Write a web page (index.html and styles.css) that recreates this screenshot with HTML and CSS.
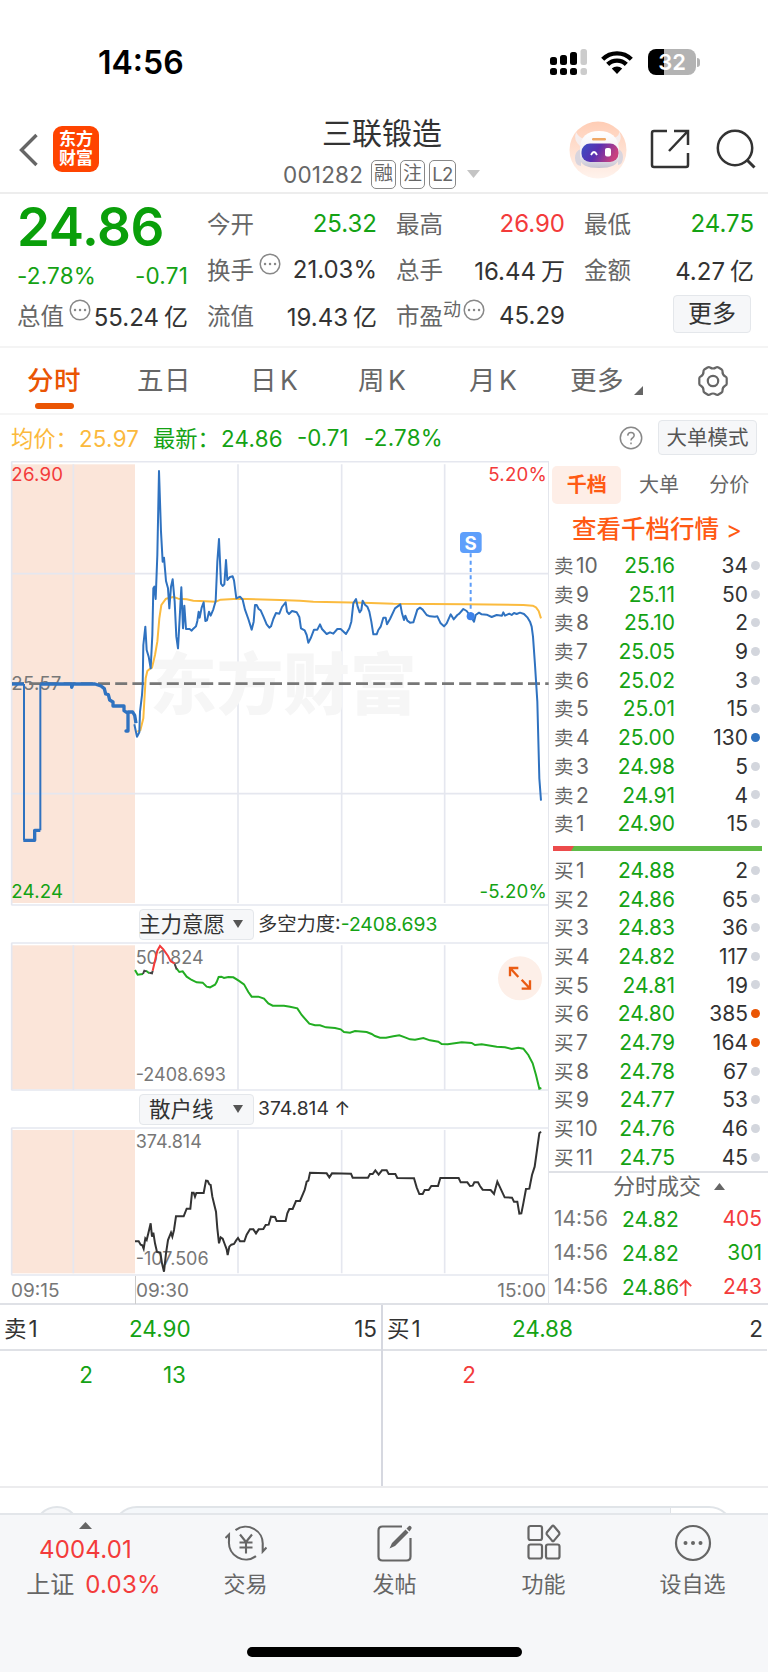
FILE: index.html
```
<!DOCTYPE html>
<html lang="zh-CN">
<head>
	<meta charset="utf-8">
	<title>三联锻造 001282</title>
	<link rel="stylesheet" href="styles.css">
</head>
<body>

<!-- Phone status bar -->
<div class="status">
	<span class="clock">14:56</span>
	<svg class="signal" width="38" height="26" viewBox="0 0 38 26">
		<g fill="#000">
			<rect x="0" y="8" width="7" height="8" rx="2.5"/><rect x="10" y="6" width="7" height="10" rx="2.5"/><rect x="20" y="3" width="7" height="13" rx="2.5"/>
			<rect x="0" y="19" width="7" height="7" rx="2.5"/><rect x="10" y="19" width="7" height="7" rx="2.5"/><rect x="20" y="19" width="7" height="7" rx="2.5"/>
		</g>
		<rect x="30.500" y="0" width="6.500" height="16" rx="2.500" fill="#ccc"/><rect x="30.500" y="19" width="6.500" height="7" rx="2.500" fill="#ccc"/>
	</svg>
	<svg class="wifi" width="32" height="24" viewBox="0 0 32 24">
		<g fill="none" stroke="#000" stroke-width="4.400">
			<path d="M1.700 9.200a20.400 20.400 0 0 1 28.600 0"/>
			<path d="M6.700 14.400a13.300 13.300 0 0 1 18.600 0"/>
		</g>
		<path d="M10.800 18.500a7.500 7.500 0 0 1 10.400 0L16 24z" fill="#000"/>
	</svg>
	<div class="battery"><span>32</span></div>
	<i class="battery-cap"></i>
</div>

<!-- Title bar -->
<div class="header">
	<svg class="back" width="20" height="34" viewBox="0 0 20 34"><path d="M17.500 2 2.500 17l15 15" fill="none" stroke="#666" stroke-width="3.400"/></svg>
	<div class="logo">东方<br>财富</div>
	<div class="title">
		<div class="name">三联锻造</div>
		<div class="code">
			<span class="num">001282</span><span class="tag">融</span><span class="tag">注</span><span class="tag l2">L2</span>
			<svg width="13" height="8" viewBox="0 0 13 8"><path d="M0 0h13L6.500 8z" fill="#c4c4c4"/></svg>
		</div>
	</div>
	<svg class="robot" width="58" height="58" viewBox="0 0 58 58">
		<defs>
			<linearGradient id="halo" x1="0" y1="0" x2="0" y2="1"><stop offset="0" stop-color="#ffcdb5"/><stop offset="1" stop-color="#fff3ed"/></linearGradient>
			<linearGradient id="visor" x1="0" y1="0" x2="1" y2=".3"><stop offset="0" stop-color="#3a4fc4"/><stop offset=".5" stop-color="#5a2fb0"/><stop offset="1" stop-color="#c8407f"/></linearGradient>
			<linearGradient id="shell" x1="0" y1="0" x2="0" y2="1"><stop offset="0" stop-color="#fff"/><stop offset=".6" stop-color="#f2eff3"/><stop offset="1" stop-color="#c6c4d2"/></linearGradient>
		</defs>
		<circle cx="29" cy="29" r="28.500" fill="url(#halo)"/>
		<path d="M7 11q3 6 9 7l-5 7q-7-6-4-14zM50 10q1 5-5 7l4 6q5-5 1-13z" fill="#f6eeee"/>
		<path d="M6 37q0-7 6-9v17q-6-1-6-8zM54 36q0-6-5-8v16q5-1 5-8z" fill="#d9d5de"/>
		<path d="M11 27q1-17 19-17t20 17v10q-1 10-20 10T11 37z" fill="url(#shell)"/>
		<rect x="12.500" y="22.500" width="37" height="18.500" rx="8.500" fill="url(#visor)"/>
		<path d="M22 34q3-6 6 0" fill="none" stroke="#fff" stroke-width="1.800"/>
		<rect x="36" y="27" width="6" height="8.500" rx="2" fill="#fff"/>
		<rect x="23" y="17" width="14" height="2.500" rx="1.200" fill="#efa765"/>
	</svg>
	<svg class="share" width="40" height="40" viewBox="0 0 40 40"><path d="M17 2H4Q2 2 2 4v32q0 2 2 2h32q2 0 2-2V24M24 2H38v14M37 3 19 22" fill="none" stroke="#333" stroke-width="2.500"/></svg>
	<svg class="search" width="40" height="40" viewBox="0 0 40 40"><circle cx="19" cy="19" r="17.200" fill="none" stroke="#333" stroke-width="2.500"/><path d="M31 31 38.500 38.500" stroke="#333" stroke-width="3"/></svg>
</div>

<!-- Quote -->
<div class="quote">
	<div class="main-col">
		<div class="price">24.86</div>
		<div class="change"><span>-2.78%</span><span>-0.71</span></div>
		<div class="cell"><label>总值</label><svg class="dots" width="22" height="22" viewBox="0 0 22 22"><circle cx="11" cy="11" r="9.800"/><path d="M6 11h.1M11 11h.1M16 11h.1"/></svg><b>55.24<i></i>亿</b></div>
	</div>
	<div class="col">
		<div class="cell"><label>今开</label><b class="down">25.32</b></div>
		<div class="cell"><label>换手</label><svg class="dots gap" width="22" height="22" viewBox="0 0 22 22"><circle cx="11" cy="11" r="9.800"/><path d="M6 11h.1M11 11h.1M16 11h.1"/></svg><b>21.03%</b></div>
		<div class="cell"><label>流值</label><b>19.43<i></i>亿</b></div>
	</div>
	<div class="col">
		<div class="cell"><label>最高</label><b class="up">26.90</b></div>
		<div class="cell"><label>总手</label><b>16.44<i></i>万</b></div>
		<div class="cell"><label>市盈</label><em>动</em><svg class="dots" width="22" height="22" viewBox="0 0 22 22"><circle cx="11" cy="11" r="9.800"/><path d="M6 11h.1M11 11h.1M16 11h.1"/></svg><b>45.29</b></div>
	</div>
	<div class="col">
		<div class="cell"><label>最低</label><b class="down">24.75</b></div>
		<div class="cell"><label>金额</label><b>4.27<i></i>亿</b></div>
		<div class="cell"><button class="more">更多</button></div>
	</div>
</div>

<!-- Period tabs -->
<div class="periods">
	<span class="active">分时</span>
	<span>五日</span>
	<span>日<i></i>K</span>
	<span>周<i></i>K</span>
	<span>月<i></i>K</span>
	<span class="has-more">更多<svg width="9" height="9" viewBox="0 0 9 9"><path d="M9 0v9H0z" fill="#666"/></svg></span>
	<svg class="gear" width="32" height="32" viewBox="0 0 32 32"><g fill="none" stroke="#666" stroke-width="2.200"><path d="M10.500 2.500q1.500-.9 2.500 0 3 2 6 0 1-.9 2.500 0l3.200 2q.9.700.8 2-.2 3.300 2.900 5 1.300.6 1.300 1.800v5.400q0 1.200-1.300 1.800-3.100 1.700-2.900 5 .1 1.300-.8 2l-3.200 2q-1.500.9-2.500 0-3-2-6 0-1 .9-2.500 0l-3.200-2q-.9-.7-.8-2 .2-3.300-2.900-5-1.300-.6-1.300-1.800v-5.400q0-1.200 1.300-1.800 3.100-1.700 2.900-5-.1-1.300.8-2z"/><circle cx="16" cy="16" r="5.200"/></g></svg>
</div>

<div class="legend">
	<span class="avg">均价：<span class="n">25.97</span></span>
	<span class="last">最新：<span class="n">24.86</span></span>
	<span class="d1">-0.71</span>
	<span class="d2">-2.78%</span>
	<svg class="help" width="24" height="24" viewBox="0 0 24 24"><circle cx="12" cy="12" r="10.700" fill="none" stroke="#888" stroke-width="1.500"/><path d="M8.700 9.600q.2-3.100 3.300-3.100t3.200 2.800q0 1.600-1.700 2.700-1.500.9-1.500 2.500M12 16.500v1.700" fill="none" stroke="#888" stroke-width="1.500"/></svg>
	<button class="mode">大单模式</button>
</div>

<div class="board">
	<div class="charts">
		<!-- Intraday price -->
		<svg class="chart" width="549" height="445" viewBox="0 18 1647 1335">
			<rect x="36" y="28" width="369" height="1316" fill="#fbe5d9"/>
			<g class="grid">
				<path d="M34 20h1612M34 1350h1612M35 20v1330M36 356h1608M36 1016h1608M220 28v1316M714 28v1316M1025 28v1316M1334 28v1316"/>
			</g>
			<text class="mark" x="450" y="763">东方财富</text>
			<path d="M36 686h1610" stroke="#777" stroke-width="8" stroke-dasharray="36 15.600" fill="none"/>
			<text class="axis" x="34" y="705">25.57</text>
			<text class="axis red" x="34" y="78">26.90</text>
			<text class="axis green" x="34" y="1330">24.24</text>
			<text class="axis red end" x="1641" y="78">5.20%</text>
			<text class="axis green end" x="1641" y="1330">-5.20%</text>
			<polyline class="line-avg" points="412,830 421,826 430,790 434,720 437,670 442,648 450,641 456,638 465,600 472,560 478,490 484,450 498,431 510,428 520,426 535,431 560,433 580,437 600,438 648,440 662,434 714,431 840,435 900,437 940,440 1090,443 1180,446 1400,448 1570,450 1598,452 1608,457 1616,468 1623,490"/>
			<path class="line-price thick" d="M36 687h36"/>
			<path class="line-price" d="M72 687v469M121 1126V687"/>
			<path class="line-price thick" d="M70 1156h34v-30h17M121 687h94v10l4-10h66l18 6 10 8 4 16 8 2 4 16 10 6v12h33v14l12 8v53h-6 6v-57h14l6 10 4 24"/>
			<polyline class="line-price" points="403,808 411,845 418,832 420,770 426,720 428,690 430,570 436,515 440,585 446,605 452,640 457,540 460,400 463,395 467,432 472,300 477,48 483,230 488,320 492,308 498,378 504,400 508,460 513,395 518,373 524,440 529,545 534,580 539,490 544,397 549,520 553,452 558,522 569,522 575,527 580,521 588,514 592,498 596,470 599,488 605,458 611,442 616,498 621,496 627,470 632,482 640,463 647,438 652,320 657,252 663,386 668,393 673,388 678,315 682,375 690,366 698,364 702,376 709,430 720,425 728,434 735,464 745,492 755,524 761,500 765,450 770,450 776,462 782,466 790,484 800,508 808,518 813,514 820,492 828,474 838,476 846,456 857,442 861,470 867,477 876,468 890,472 898,486 903,520 914,526 920,540 925,563 932,550 942,524 952,524 960,508 966,522 980,537 990,532 1000,536 1012,522 1022,522 1038,537 1048,520 1054,500 1060,445 1068,432 1073,455 1079,472 1084,465 1088,437 1095,449 1102,455 1108,470 1114,500 1120,538 1130,538 1135,525 1142,515 1150,488 1157,488 1161,508 1170,492 1185,460 1201,448 1206,475 1212,495 1216,482 1222,497 1230,503 1240,502 1252,464 1260,458 1268,464 1280,480 1290,484 1305,485 1312,484 1322,505 1332,514 1340,505 1352,478 1361,493 1372,480 1378,476 1390,462 1400,468 1412,484 1422,500 1427,480 1437,473 1445,478 1460,479 1475,486 1490,480 1506,482 1510,472 1515,482 1528,476 1535,480 1542,474 1550,477 1560,473 1572,477 1582,487 1590,500 1595,515 1599,545 1605,630 1612,740 1618,970 1623,1037"/>
			<path d="M1412 295v180" stroke="#5c9cf8" stroke-width="6" stroke-dasharray="12 10"/>
			<circle cx="1412" cy="484" r="12" fill="#3d82ea"/>
			<rect x="1380" y="231" width="65" height="63" rx="11" fill="#5e9ffb"/>
			<text class="flag" x="1412" y="284">S</text>
		</svg>
		<div class="picker">
			<button><span class="wide">主力意愿</span><i></i></button>
			<span>多空力度:<span class="down">-2408.693</span></span>
		</div>
		<!-- Main force -->
		<svg class="chart" width="549" height="149" viewBox="0 126 1647 447">
			<rect x="36" y="136" width="369" height="432" fill="#fbe5d9"/>
			<g class="grid"><path d="M34 129h1612M34 570h1612M35 129v441M220 136v432M714 136v432M1025 136v432M1334 136v432"/></g>
			<text class="axis small" x="407" y="192">501.824</text>
			<text class="axis small" x="407" y="543">-2408.693</text>
			<path class="flow" d="M405 210l8 14 16-2M438 212l10 8"/>
			<polyline class="flow" points="530,206 538,216 548,214 560,230 575,240 590,247 608,248 620,260 630,262 645,254 650,246 656,231 664,230 672,234 685,231 700,232 716,242 732,253 745,276 755,290 775,290 792,296 805,310 818,317 852,317 870,320 892,325 905,345 928,371 945,376 960,376 978,382 1005,384 1022,388 1032,396 1050,398 1065,393 1100,396 1115,402 1125,408 1140,413 1158,413 1180,409 1198,406 1215,412 1230,418 1245,419 1270,414 1290,421 1315,425 1325,432 1343,433 1385,427 1415,429 1425,435 1445,433 1490,440 1515,442 1535,447 1555,443 1570,446 1585,465 1598,490 1608,525 1618,566 1624,564"/>
			<path class="flow gray" d="M429 222l4-10 6 2M448 218l8 2 2-8M524 192l6 16"/>
			<path class="flow hot" d="M458 212l14-60 8-14 10 10 14 20 8 16 12 6"/>
			<circle cx="1560" cy="235" r="66" fill="#fdefe8"/>
			<path d="M1516 204h-25v25M1492 205l24 26M1526 266h25v-25M1550 265l-24-26" transform="translate(39 0)" fill="none" stroke="#ea5c14" stroke-width="7"/>
		</svg>
		<div class="picker">
			<button><span>散户线</span><i></i></button>
			<span>374.814 ↑</span>
		</div>
		<!-- Retail line -->
		<svg class="chart" width="549" height="149" viewBox="0 681 1647 447">
			<rect x="36" y="690" width="369" height="430" fill="#fbe5d9"/>
			<g class="grid"><path d="M34 684h1612M34 1125h1612M35 684v441M220 690v430M714 690v430M1025 690v430M1334 690v430"/></g>
			<text class="axis small" x="407" y="745">374.814</text>
			<text class="axis small" x="407" y="1096">-107.506</text>
			<polyline class="retail" points="405,1024 416,1024 422,1034 427,1036 431,1046 436,1015 440,1020 445,1000 452,970 456,1010 460,998 465,1030 471,1056 481,1058 486,1090 492,1115 498,1060 504,1020 513,998 517,1010 522,990 528,949 551,949 560,926 571,926 576,878 581,878 585,890 589,879 611,879 618,842 623,843 628,853 632,855 637,890 643,915 648,935 652,985 657,1030 662,1012 668,1016 674,1032 680,1048 683,1065 688,1040 694,1034 702,1032 708,1022 714,1014 720,1024 733,1024 740,1004 750,988 760,988 768,1000 776,988 790,987 797,975 806,974 813,950 825,951 830,963 857,963 862,940 868,927 878,927 888,903 900,903 914,870 920,845 925,842 930,818 980,820 988,832 996,820 1053,821 1058,833 1104,833 1110,822 1118,822 1126,811 1136,824 1146,811 1160,811 1166,822 1186,822 1192,834 1242,835 1250,862 1258,882 1268,882 1274,870 1286,870 1294,858 1314,858 1321,834 1376,834 1382,847 1402,847 1410,858 1418,857 1423,847 1434,847 1440,858 1448,869 1472,870 1482,882 1492,845 1514,892 1536,893 1542,905 1552,905 1558,941 1564,940 1570,910 1578,867 1588,866 1596,825 1604,800 1611,750 1618,700 1623,695"/>
		</svg>
		<div class="times"><span>09:15</span><span class="open">09:30</span><span>15:00</span></div>
	</div>

	<!-- Order book -->
	<div class="book">
		<div class="book-tabs"><span class="active">千档</span><span>大单</span><span>分价</span></div>
		<div class="book-link">查看千档行情<i>&gt;</i></div>
		<div class="rows">
			<p><u>卖</u><s>10</s><b>25.16</b><em>34</em><i></i></p>
			<p><u>卖</u><s>9</s><b>25.11</b><em>50</em><i></i></p>
			<p><u>卖</u><s>8</s><b>25.10</b><em>2</em><i></i></p>
			<p><u>卖</u><s>7</s><b>25.05</b><em>9</em><i></i></p>
			<p><u>卖</u><s>6</s><b>25.02</b><em>3</em><i></i></p>
			<p><u>卖</u><s>5</s><b>25.01</b><em>15</em><i></i></p>
			<p><u>卖</u><s>4</s><b>25.00</b><em>130</em><i class="blue"></i></p>
			<p><u>卖</u><s>3</s><b>24.98</b><em>5</em><i></i></p>
			<p><u>卖</u><s>2</s><b>24.91</b><em>4</em><i></i></p>
			<p><u>卖</u><s>1</s><b>24.90</b><em>15</em><i></i></p>
		</div>
		<svg class="ratio" width="209" height="5" viewBox="0 0 209 5"><path d="M0 0h209v5H0z" fill="#5fbb46"/><path d="M0 0h21l-3 5H0z" fill="#ec4b4b"/></svg>
		<div class="rows buy">
			<p><u>买</u><s>1</s><b>24.88</b><em>2</em><i></i></p>
			<p><u>买</u><s>2</s><b>24.86</b><em>65</em><i></i></p>
			<p><u>买</u><s>3</s><b>24.83</b><em>36</em><i></i></p>
			<p><u>买</u><s>4</s><b>24.82</b><em>117</em><i></i></p>
			<p><u>买</u><s>5</s><b>24.81</b><em>19</em><i></i></p>
			<p><u>买</u><s>6</s><b>24.80</b><em>385</em><i class="orange"></i></p>
			<p><u>买</u><s>7</s><b>24.79</b><em>164</em><i class="orange"></i></p>
			<p><u>买</u><s>8</s><b>24.78</b><em>67</em><i></i></p>
			<p><u>买</u><s>9</s><b>24.77</b><em>53</em><i></i></p>
			<p><u>买</u><s>10</s><b>24.76</b><em>46</em><i></i></p>
			<p><u>买</u><s>11</s><b>24.75</b><em>45</em><i></i></p>
		</div>
		<div class="deal-title">分时成交<svg width="11" height="7" viewBox="0 0 11 7"><path d="M0 7h11L5.500 0z" fill="#666"/></svg></div>
		<div class="deals">
			<p><u>14:56</u><b>24.82</b><em class="up">405</em></p>
			<p><u>14:56</u><b>24.82</b><em class="down">301</em></p>
			<p><u>14:56</u><b>24.86<svg width="13" height="17" viewBox="0 0 13 17"><path d="M6.500 17V1.500M.800 7.200l5.700-5.700 5.700 5.700" fill="none" stroke="#f33b3b" stroke-width="1.800"/></svg></b><em class="up">243</em></p>
		</div>
	</div>
</div>

<!-- Best bid / ask queues -->
<div class="queues">
	<div class="queue">
		<div class="best"><span>卖<i></i>1</span><b class="down">24.90</b><span>15</span></div>
		<div class="lots down"><span>2</span><span>13</span></div>
	</div>
	<div class="queue">
		<div class="best"><span>买<i></i>1</span><b class="down">24.88</b><span>2</span></div>
		<div class="lots up"><span>2</span></div>
	</div>
</div>

<div class="peek"><div class="peek-circle"></div><div class="peek-pill"></div></div>

<!-- Bottom bar -->
<div class="bottom">
	<div class="index">
		<svg width="13" height="7" viewBox="0 0 13 7"><path d="M0 7h13L6.500 0z" fill="#666"/></svg>
		<div class="up">4004.01</div>
		<div class="pct"><span>上证</span><span class="up">0.03%</span></div>
	</div>
	<div class="item">
		<svg width="42" height="38" viewBox="0 0 42 38"><g fill="none" stroke="#666" stroke-width="2.100"><path d="M10.500 6.200A17 17 0 0 1 37.700 21v6.500l3.800-4M31 32.200A17 17 0 0 1 4 17v-6.500L.500 14"/><path d="M15 10.500l6 7.500 6-7.500M21 18v11.500M14.500 18.500h13M14.500 23.500h13"/></g></svg>
		<span>交易</span>
	</div>
	<div class="item">
		<svg width="36" height="38" viewBox="0 0 36 38"><path d="M25 2.500H5.500Q1.500 2.500 1.500 6.500v26q0 4 4 4h24q4 0 4-4V14" fill="none" stroke="#666" stroke-width="2.200"/><path d="M12.500 24.500l2.500-5.500L28.500 5.500l3 3L18 22zM29.500 4.500l2.500-2.500q1-.5 2 .5t.5 2L32.500 7.500z" fill="#666"/></svg>
		<span>发帖</span>
	</div>
	<div class="item">
		<svg width="34" height="36" viewBox="0 0 34 36"><g fill="none" stroke="#666" stroke-width="2.200"><rect x="1.500" y="2" width="13.500" height="14" rx="2"/><rect x="1.500" y="20.500" width="13.500" height="14" rx="2"/><rect x="19" y="20.500" width="13.500" height="14" rx="2"/><path d="M25 2.200q1-1 2 0l5 6q.8 1.200 0 2.400l-5 6q-1 1-2 0l-5-6q-.8-1.200 0-2.400z"/></g></svg>
		<span>功能</span>
	</div>
	<div class="item">
		<svg width="38" height="38" viewBox="0 0 38 38"><circle cx="19" cy="19" r="17" fill="none" stroke="#666" stroke-width="2.200"/><g fill="#666"><circle cx="11.500" cy="19" r="2"/><circle cx="19" cy="19" r="2"/><circle cx="26.500" cy="19" r="2"/></g></svg>
		<span>设自选</span>
	</div>
</div>
<div class="home"><i></i></div>

</body>
</html>
```
FILE: styles.css
```
* {
	box-sizing: border-box;
}
body {
	margin: 0;
	width: 768px;
	height: 1672px;
	overflow: hidden;
	background: #fff;
	color: #333;
	font-family: Inter, "Noto Sans CJK SC", sans-serif;
	font-size: 22px;
}
p {
	margin: 0;
}
b, em, i, u, s {
	font-weight: 400;
	font-style: normal;
	text-decoration: none;
}
button {
	font-family: inherit;
	padding: 0;
	background: #f6f7f9;
	border: 1px solid #e4e7eb;
	border-radius: 4px;
	color: #333;
}
svg {
	display: block;
	flex: none;
}
.up { color: #f33b3b; }
.down { color: #14a214; }

/* status bar */
.status {
	height: 112px;
	padding: 43px 0 0 98px;
	display: flex;
	align-items: flex-start;
}
.clock {
	width: 452px;
	font-size: 32px;
	font-weight: 600;
	color: #000;
	line-height: 40px;
}
.signal { margin-top: 6px; }
.wifi { margin: 7px 0 0 13px; }
.battery {
	width: 48px;
	height: 26px;
	margin: 6px 0 0 15px;
	border-radius: 8px;
	background: linear-gradient(90deg, #000 16px, #b3b3b3 16px);
	color: #fff;
	font-size: 22px;
	font-weight: 600;
	line-height: 26px;
	text-align: center;
}
.battery-cap {
	width: 3px;
	height: 9px;
	margin: 15px 0 0 1px;
	border-radius: 0 3px 3px 0;
	background: #b3b3b3;
}

/* title bar */
.header {
	height: 82px;
	border-bottom: 2px solid #ededed;
	display: flex;
	align-items: flex-start;
}
.back { margin: 21px 0 0 19px; }
.logo {
	width: 46px;
	height: 46px;
	margin: 14px 0 0 14px;
	padding-top: 4px;
	border-radius: 9px;
	background: #ff4400;
	color: #fff;
	font-size: 17px;
	font-weight: 700;
	line-height: 19px;
	text-align: center;
}
.title {
	width: 470px;
	padding-left: 184px;
}
.name {
	padding: 1px 0 0 39px;
	font-size: 30px;
	line-height: 40px;
}
.code {
	display: flex;
	align-items: center;
	height: 42px;
	color: #666;
	gap: 4px;
}
.code .num {
	width: 84px;
	font-size: 22.5px;
	letter-spacing: 0.2px;
}
.code svg { margin-left: 7px; }
.tag {
	height: 29px;
	width: 25px;
	border: 1.5px solid #888;
	border-radius: 5px;
	font-size: 19px;
	line-height: 26px;
	text-align: center;
}
.tag.l2 { width: 27px; font-size: 18.5px; letter-spacing: -0.5px; }
.robot { margin-top: 9px; }
.share { margin: 17px 0 0 23px; }
.search { margin: 17px 0 0 26px; }

/* quote */
.quote {
	height: 154px;
	padding: 6px 13px 0 17px;
	border-bottom: 2px solid #f4f4f4;
	display: grid;
	grid-template-columns: 171px 170px 169px 170px;
	column-gap: 19px;
	font-size: 24px;
}
.price {
	height: 56px;
	line-height: 54px;
	font-size: 53px;
	font-weight: 600;
	color: #0a9f0a;
	letter-spacing: -0.4px;
}
.change {
	height: 36px;
	line-height: 39px;
	font-size: 22.5px;
	color: #14a214;
	display: flex;
	justify-content: space-between;
	letter-spacing: 0.2px;
}
.cell {
	height: 46px;
	display: flex;
	align-items: center;
	white-space: nowrap;
}
.cell label { color: #666; font-size: 23.5px; }
.cell b { margin-left: auto; }
.cell b i { display: inline-block; width: 5px; }
.cell em { font-size: 18px; color: #666; margin-bottom: 14px; }
.dots {
	margin: 0 0 11px 5px;
	fill: none;
	stroke: #888;
	stroke-width: 1.5;
}
.dots path { stroke-width: 2.4; stroke-linecap: round; }
em + .dots { margin-left: 2px; }
.more {
	width: 78px;
	height: 38px;
	margin: -3px 3px 0 auto;
	font-size: 24px;
	line-height: 35px;
}

/* period tabs */
.periods {
	height: 67px;
	padding-left: 27px;
	border-bottom: 2px solid #f5f5f5;
	display: flex;
	align-items: center;
	color: #666;
	font-size: 26.5px;
}
.periods span {
	width: 110px;
	line-height: 65px;
	height: 65px;
	letter-spacing: 0.5px;
}
.periods span:nth-child(2) { width: 113px; }
.periods span:nth-child(3) { width: 108px; }
.periods span:nth-child(4) { width: 111px; }
.periods span:nth-child(5) { width: 101px; }
.periods .has-more { width: 127px; display: flex; }
.has-more svg { margin: 38px 0 0 10px; }
.periods i { display: inline-block; width: 3px; }
.periods .active { color: #ea5504; font-weight: 500; }
.periods .active::after {
	content: "";
	display: block;
	width: 39px;
	height: 6px;
	margin: -10px 0 0 8px;
	border-radius: 3px;
	background: #ea5504;
}

.legend {
	height: 46px;
	padding: 0 11px 2px 11px;
	display: flex;
	align-items: center;
	font-size: 22.3px;
	color: #14a214;
	white-space: nowrap;
}
.legend .avg { width: 142px; color: #fbb93c; }
.legend .last { width: 144px; }
.legend .n { margin-left: 1px; letter-spacing: 0.3px; }
.legend .d1 { width: 67px; }
.legend .d2 { letter-spacing: 0.3px; }
.help { margin: 2px 15px 0 auto; }
.mode {
	width: 99px;
	height: 35px;
	margin-top: 1px;
	font-size: 20.5px;
	line-height: 30px;
	color: #555;
}

/* charts */
.board {
	display: flex;
	border-bottom: 2px solid #dfe1e6;
	height: 844px;
}
.charts {
	width: 549px;
	border-right: 1px solid #e4e6ec;
}
.grid path { fill: none; stroke: #e5e7ef; stroke-width: 5; }
.axis { font-size: 56px; fill: #777; letter-spacing: 0.6px; }
.axis.red { fill: #f33b3b; }
.axis.green { fill: #14a214; }
.axis.small { font-size: 54px; letter-spacing: 0; }
.end { text-anchor: end; }
.mark { font-size: 200px; font-weight: 800; fill: #f6f6f6; }
.line-price { fill: none; stroke: #2f72c0; stroke-width: 6; stroke-linejoin: round; }
.line-price.thick { stroke-width: 10; }
.line-avg { fill: none; stroke: #fbbb3f; stroke-width: 6; stroke-linejoin: round; }
.flag { font-size: 56px; font-weight: 700; fill: #fff; text-anchor: middle; }
.flow { fill: none; stroke: #22ad22; stroke-width: 6; }
.flow.gray { stroke: #444; }
.flow.hot { stroke: #f33b3b; }
.retail { fill: none; stroke: #333; stroke-width: 6; }
.picker {
	height: 36px;
	padding-left: 139px;
	display: flex;
	align-items: center;
	gap: 4px;
	font-size: 19.3px;
}
.picker > span { margin-top: -2px; }
.picker button {
	width: 115px;
	height: 31px;
	font-size: 21.5px;
	line-height: 28px;
	display: flex;
	align-items: center;
	justify-content: space-between;
	padding: 0 10px 0 9px;
}
.picker .wide { margin-left: -10px; white-space: nowrap; }
.picker i {
	border: 5px solid transparent;
	border-top: 8px solid #555;
	border-bottom: 0;
}
.times {
	display: flex;
	height: 28px;
	line-height: 30px;
	padding: 0 2px 0 11px;
	font-size: 19px;
	color: #777;
}
.times .open {
	margin: 0 auto 0 72px;
	border-left: 1px solid #ccc;
}
.times span:first-child { width: 52px; }

/* order book */
.book {
	width: 219px;
}
.book-tabs {
	display: flex;
	height: 43px;
	padding: 5px 4px 0 3px;
	font-size: 20px;
	line-height: 38px;
	color: #666;
}
.book-tabs span { width: 70px; height: 38px; text-align: center; }
.book-tabs span:nth-child(2) { margin: 0 1px 0 3px; }
.book-tabs .active {
	background: #feeee7;
	color: #ff5a14;
	font-weight: 700;
	border-radius: 5px;
}
.book-link {
	height: 48px;
	padding-left: 23px;
	line-height: 51px;
	font-size: 24.5px;
	font-weight: 500;
	color: #ff5a14;
	white-space: nowrap;
}
.book-link i { margin-left: 7px; font-size: 24px; }
.rows p {
	display: flex;
	align-items: center;
	height: 28.7px;
	line-height: 28.7px;
	padding-left: 5px;
	font-size: 21px;
}
.rows u { width: 22px; font-size: 19.5px; color: #666; }
.rows s { width: 39px; color: #666; }
.rows b { width: 60px; text-align: right; color: #14a214; }
.rows em { width: 73px; text-align: right; }
.rows i {
	width: 9px;
	height: 9px;
	margin: -2px 0 0 3px;
	border-radius: 50%;
	background: #d3d6dd;
}
.rows .blue { background: #2f72c0; }
.rows .orange { background: #ea5504; }
.ratio { margin: 7px 0 6px 4px; }
.deal-title {
	height: 31px;
	margin-top: -1px;
	border-top: 2px solid #dfe1e6;
	padding-left: 64px;
	display: flex;
	align-items: center;
	gap: 13px;
	font-size: 22px;
	line-height: 26px;
	padding-bottom: 3px;
	color: #666;
}
.deals p {
	display: flex;
	height: 34px;
	line-height: 33px;
	padding: 0 6px 0 5px;
	font-size: 21px;
}
.deals u { width: 68px; color: #777; }
.deals b { color: #14a214; display: flex; align-items: center; }
.deals em { margin-left: auto; }

/* queues */
.queues {
	display: flex;
	height: 183px;
	border-bottom: 2px solid #ececee;
	font-size: 22.5px;
}
.queue { width: 384px; }
.queue:first-child { width: 383px; border-right: 2px solid #d6d8e0; height: 181px; }
.best {
	display: grid;
	grid-template-columns: 125px 1fr auto;
	align-items: center;
	height: 46px;
	padding: 2px 4px 0 4px;
	border-bottom: 2px solid #dfe1e6;
}
.best i { display: inline-block; width: 2px; }
.best span:first-child { margin-top: -2px; }
.lots {
	display: flex;
	line-height: 47px;
}
.lots span { width: 93px; text-align: right; }

.peek {
	height: 25px;
	padding-top: 18px;
	overflow: hidden;
	display: flex;
}
.peek-circle {
	width: 46px;
	height: 46px;
	margin: 0 32px 0 34px;
	border: 2px solid #e0e4e8;
	border-radius: 50%;
	background: #f6f7f9;
	flex: none;
}
.peek-pill {
	width: 622px;
	height: 50px;
	flex: none;
	border: 2px solid #e0e4e8;
	border-radius: 25px;
	background: linear-gradient(90deg, #f4f7fa 556px, #dfe2e6 556px, #dfe2e6 557px, #fff 557px);
}

/* bottom bar */
.bottom {
	height: 108px;
	border-top: 2px solid #e3e6ea;
	background: #f6f7f9;
	display: flex;
	color: #666;
}
.index {
	width: 171px;
	display: flex;
	flex-direction: column;
	align-items: center;
	padding-top: 7px;
	font-size: 24px;
}
.index .up { line-height: 42px; letter-spacing: 0.2px; }
.pct { display: flex; gap: 11px; line-height: 28px; padding-left: 16px; }
.pct .up { line-height: 28px; }
.item {
	width: 149px;
	display: flex;
	flex-direction: column;
	align-items: center;
	justify-content: space-between;
	height: 84px;
	padding-top: 9px;
	font-size: 22px;
	line-height: 30px;
}
.home {
	height: 52px;
	background: #f6f7f9;
	display: flex;
	justify-content: center;
	padding-top: 26px;
}
.home i {
	width: 275px;
	height: 10px;
	border-radius: 5px;
	background: #000;
}
```
